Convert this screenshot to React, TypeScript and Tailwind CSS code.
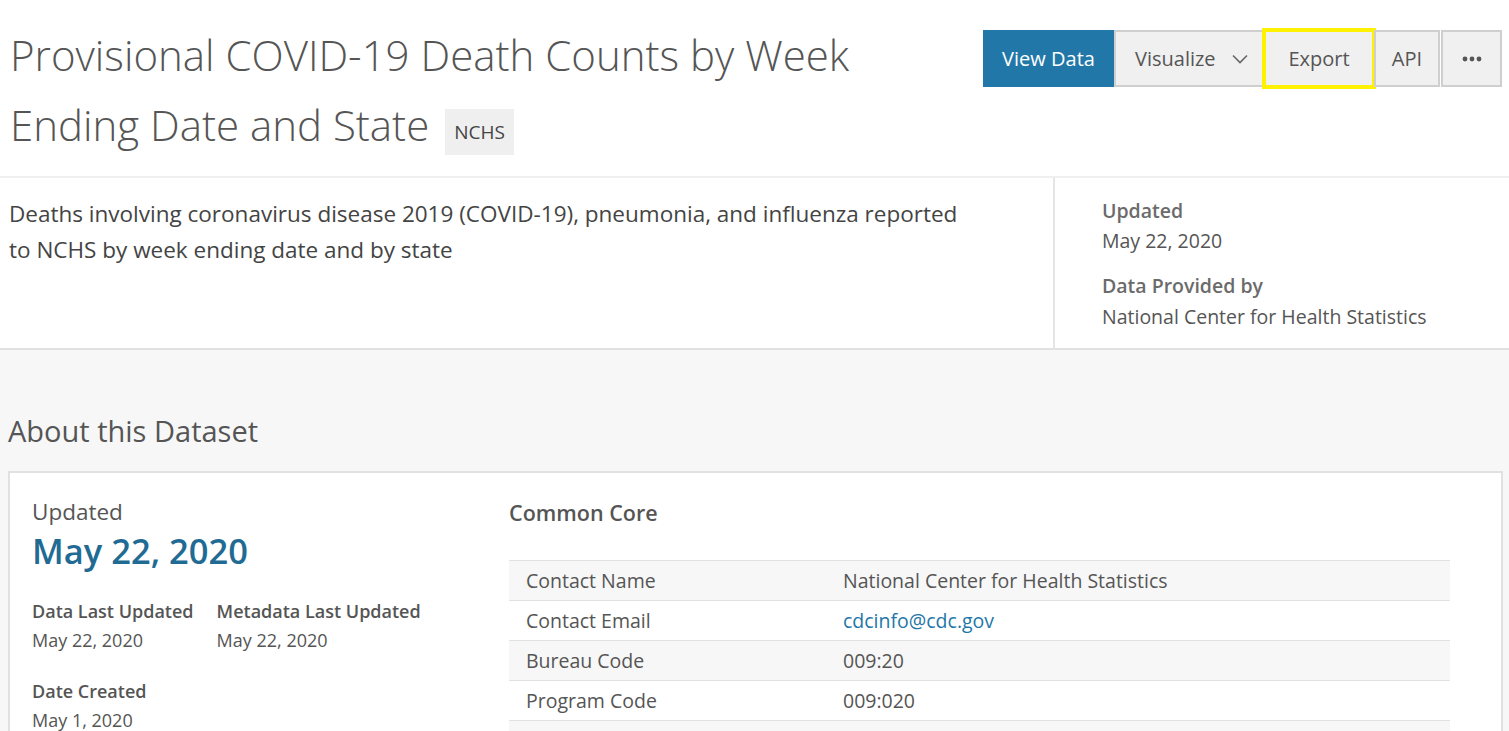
function Chevron() {
  return (
    <svg width="16" height="10" viewBox="0 0 16 10" fill="none" className="ml-[16px]">
      <path d="M1 1.5 L8 8.5 L15 1.5" stroke="#666" strokeWidth="1.6" />
    </svg>
  );
}

function Dots() {
  return (
    <svg width="20" height="6" viewBox="0 0 20 6">
      <circle cx="3" cy="3" r="2.4" fill="#555" />
      <circle cx="10" cy="3" r="2.4" fill="#555" />
      <circle cx="17" cy="3" r="2.4" fill="#555" />
    </svg>
  );
}

const btn =
  "h-[57px] flex items-center justify-center border-2 border-[#cfcfcf] bg-[#f0f0f0] text-[20px] text-[#555]";

const coreRows: { label: string; value: string; link?: boolean }[] = [
  { label: "Contact Name", value: "National Center for Health Statistics" },
  { label: "Contact Email", value: "cdcinfo@cdc.gov", link: true },
  { label: "Bureau Code", value: "009:20" },
  { label: "Program Code", value: "009:020" },
  { label: "Public Access Level", value: "Public" },
];

export default function App() {
  return (
    <div className="min-h-screen bg-[#f7f7f7] font-['Open_Sans',sans-serif] text-[#555]">
      {/* header */}
      <div className="bg-white flex justify-between pl-[10px] pr-[7px] pt-[20px] pb-[16px] border-b-2 border-[#efefef]">
        <h1 className="w-[920px] text-[42px] leading-[70px] font-light text-[#555]">
          Provisional COVID-19 Death Counts by Week Ending Date and State
          <span className="inline-block align-middle ml-[16px] mt-[5px] h-[46px] leading-[46px] px-[9px] bg-[#efefef] text-[19px] font-normal text-[#444]">
            NCHS
          </span>
        </h1>
        <div className="flex items-start mt-[10px]">
          <button className="h-[57px] w-[131px] bg-[#2178a8] text-white text-[20px]">View Data</button>
          <button className={btn + " w-[150px] !justify-start pl-[19px]"}>
            Visualize
            <Chevron />
          </button>
          <button className={btn + " w-[110px] outline-[4px] outline-solid outline-[#fff200] -outline-offset-2"}>
            Export
          </button>
          <button className={btn + " w-[66px]"}>API</button>
          <button className={btn + " w-[61px] ml-px"}>
            <Dots />
          </button>
        </div>
      </div>

      {/* description */}
      <div className="bg-white flex border-b-2 border-[#e1e1e1] h-[172px]">
        <div className="flex-1 pl-[9px] pt-[18px]">
          <p className="w-[970px] text-[22.5px] leading-[36px] text-[#444]">
            Deaths involving coronavirus disease 2019 (COVID-19), pneumonia, and influenza reported to NCHS by week
            ending date and by state
          </p>
        </div>
        <div className="w-[456px] border-l-2 border-[#e5e5e5] pl-[47px] pt-[20px]">
          <div className="text-[19.5px] leading-[26px] font-semibold text-[#6b6b6b]">Updated</div>
          <div className="mt-[4px] text-[19.5px] leading-[26px] text-[#555]">May 22, 2020</div>
          <div className="mt-[19px] text-[19.5px] leading-[26px] font-semibold text-[#6b6b6b]">Data Provided by</div>
          <div className="mt-[5px] text-[19.5px] leading-[26px] text-[#555]">National Center for Health Statistics</div>
        </div>
      </div>

      {/* about */}
      <div className="px-[8px] pr-[6px] pt-[63px]">
        <h2 className="text-[29px] leading-[36px] text-[#555]">About this Dataset</h2>
        <div className="mt-[22px] bg-white border-2 border-[#e1e1e1] flex pr-[51px]">
          <div className="w-[499px] pl-[22px] pt-[24px] pb-[20px]">
            <div className="text-[22.5px] leading-[30px] text-[#555]">Updated</div>
            <div className="mt-[4px] text-[34.5px] leading-[40px] font-semibold text-[#1f6b93]">May 22, 2020</div>
            <div className="mt-[28px] flex gap-[23px]">
              <div>
                <div className="text-[18px] leading-[24px] font-semibold text-[#555]">Data Last Updated</div>
                <div className="mt-[5px] text-[18px] leading-[24px] text-[#555]">May 22, 2020</div>
              </div>
              <div>
                <div className="text-[18px] leading-[24px] font-semibold text-[#555]">Metadata Last Updated</div>
                <div className="mt-[5px] text-[18px] leading-[24px] text-[#555]">May 22, 2020</div>
              </div>
            </div>
            <div className="mt-[27px] text-[18px] leading-[24px] font-semibold text-[#555]">Date Created</div>
            <div className="mt-[5px] text-[18px] leading-[24px] text-[#555]">May 1, 2020</div>
          </div>
          <div className="flex-1 pt-[26px]">
            <h3 className="text-[21.5px] leading-[28px] font-semibold text-[#555]">Common Core</h3>
            <div className="mt-[33px] border-t border-[#e1e1e1]">
              {coreRows.map((r, i) => (
                <div
                  key={r.label}
                  className={
                    "flex h-[40px] items-center border-b border-[#e1e1e1] text-[19.5px] " +
                    (i % 2 === 0 ? "bg-[#f7f7f7]" : "bg-white")
                  }
                >
                  <div className="w-[334px] pl-[17px] text-[#555]">{r.label}</div>
                  <div className={r.link ? "text-[#1f77a7]" : "text-[#555]"}>{r.value}</div>
                </div>
              ))}
            </div>
          </div>
        </div>
      </div>
    </div>
  );
}
